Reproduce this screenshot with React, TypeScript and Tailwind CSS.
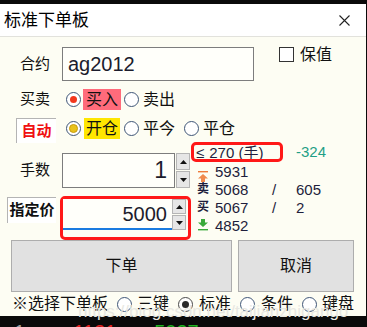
import React from "react";

function Radio({ kind }: { kind?: "red" | "yellow" | "dark" }) {
  return (
    <span
      className={
        "w-[15px] h-[15px] rounded-full border flex items-center justify-center shrink-0 bg-white " +
        (kind === "dark" ? "border-[#4a4a4a]" : "border-[#3f5677]")
      }
    >
      {kind === "red" && <span className="w-[7px] h-[7px] rounded-full bg-[#f2371c]" />}
      {kind === "yellow" && <span className="w-[9px] h-[9px] rounded-full bg-[#e9c21a] border border-[#c99d10]" />}
      {kind === "dark" && <span className="w-[7px] h-[7px] rounded-full bg-[#2a2a2a]" />}
    </span>
  );
}

function Spinner({ h }: { h: string }) {
  return (
    <div className={"w-[14px] flex flex-col gap-[1px] " + h}>
      <div className="flex-1 bg-[#e6e6e6] border border-[#b5b5b5] flex items-center justify-center">
        <svg width="7" height="4" viewBox="0 0 7 4">
          <polygon points="3.5,0 7,4 0,4" fill="#111" />
        </svg>
      </div>
      <div className="flex-1 bg-[#e6e6e6] border border-[#b5b5b5] flex items-center justify-center">
        <svg width="7" height="4" viewBox="0 0 7 4">
          <polygon points="0,0 7,0 3.5,4" fill="#111" />
        </svg>
      </div>
    </div>
  );
}

export default function App() {
  return (
    <div className="w-[367px] h-[327px] bg-[#0a0a0a] overflow-hidden flex flex-col font-['Liberation_Sans','Noto_Sans_CJK_SC',sans-serif] text-[#111]">
      <div className="h-[4px] shrink-0" />
      <div className="w-[366px] h-[312px] flex flex-col shrink-0">
        {/* title bar */}
        <div className="h-[32px] bg-white flex items-center justify-between shrink-0">
          <span className="ml-[4px] text-[17px] leading-none text-black">标准下单板</span>
          <svg width="11" height="11" viewBox="0 0 11 11" className="mr-[16px]">
            <path d="M0.5 0.5 L10.5 10.5 M10.5 0.5 L0.5 10.5" stroke="#222" strokeWidth="1.1" />
          </svg>
        </div>
        <div className="h-[1px] bg-[#e2e2dc] shrink-0" />
        {/* body */}
        <div className="flex-1 bg-[#fdfdf3] flex flex-col relative text-[16px]">
          {/* row 1 */}
          <div className="mt-[10px] h-[34px] flex items-center">
            <span className="ml-[20px] w-[42px] text-[15px]">合约</span>
            <div className="w-[192px] h-[34px] border border-[#7d7d7d] bg-[#fffffa] flex items-center">
              <span className="ml-[5px] text-[20px] text-[#1c1c2c]">ag2012</span>
            </div>
            <div className="self-start mt-[-1px] ml-[25px] flex items-center">
              <span className="w-[15px] h-[15px] border border-[#333] bg-white" />
              <span className="ml-[6px] text-[16px] leading-[16px] mt-[1px]">保值</span>
            </div>
          </div>
          {/* row 2 */}
          <div className="mt-[8px] h-[21px] flex items-center">
            <span className="ml-[20px] w-[46px] text-[15px]">买卖</span>
            <Radio kind="red" />
            <span className="ml-[2px] px-[3px] h-[21px] leading-[21px] bg-[#ff6b7b]">买入</span>
            <span className="ml-[3px]">
              <Radio />
            </span>
            <span className="ml-[4px] leading-[21px]">卖出</span>
          </div>
          {/* row 3 */}
          <div className="mt-[8px] h-[25px] flex items-start">
            <div className="ml-[16px] w-[40px] h-[25px] bg-white border-l border-t border-[#b4b4b4] flex items-center justify-center text-[15px] font-bold text-[#f01010]">
              自动
            </div>
            <span className="ml-[10px] mt-[3px]">
              <Radio kind="yellow" />
            </span>
            <span className="ml-[3px] px-[2px] h-[21px] leading-[21px] bg-[#ffe600]">开仓</span>
            <span className="ml-[4px] mt-[3px]">
              <Radio />
            </span>
            <span className="ml-[4px] h-[21px] leading-[21px]">平今</span>
            <span className="ml-[9px] mt-[3px]">
              <Radio />
            </span>
            <span className="ml-[4px] h-[21px] leading-[21px]">平仓</span>
          </div>
          {/* middle */}
          <div className="h-[97px] flex">
            <div className="w-[191px] flex flex-col shrink-0">
              <div className="mt-[10px] h-[35px] flex items-center">
                <span className="ml-[20px] w-[42px] text-[15px]">手数</span>
                <div className="w-[113px] h-[35px] border border-[#7d7d7d] bg-[#fffffa] flex items-center justify-end">
                  <span className="mr-[7px] text-[23px] text-[#1c1c2c]">1</span>
                </div>
                <div className="ml-[1px]">
                  <Spinner h="h-[35px]" />
                </div>
              </div>
              <div className="mt-[8px] h-[44px] flex items-start">
                <div className="ml-[7px] mt-[1px] w-[51px] h-[26px] bg-white border-l border-t border-[#b4b4b4] flex items-center justify-center text-[15px] font-bold">
                  指定价
                </div>
                <div className="ml-[4px] w-[131px] h-[44px] shrink-0 border-[3px] border-[#ff1818] rounded-[5px] flex items-start bg-[#fdfdf3]">
                  <div className="w-[109px] h-[31px] bg-[#fffffa] border-b-[2px] border-[#1a7be0] flex items-center justify-end">
                    <span className="mr-[5px] text-[20px] text-[#1c1c2c]">5000</span>
                  </div>
                  <Spinner h="h-[31px]" />
                </div>
              </div>
            </div>
            <div className="flex-1 flex flex-col text-[15px] text-[#1e1e3c]">
              <div className="mt-[-1px] h-[20px] flex items-center">
                <div className="w-[92px] h-[20px] border-[3px] border-[#ff1818] rounded-[5px] flex items-center shrink-0 overflow-hidden">
                  <span className="ml-[2px] leading-none text-[15px]">≤</span>
                  <span className="ml-[5px] leading-none text-[15px] whitespace-nowrap">270 (手)</span>
                </div>
                <span className="ml-[13px] text-[#1f9f86]">-324</span>
              </div>
              <div className="h-[18px] flex items-center">
                <div className="w-[24px] h-[18px] relative">
                  <svg width="12" height="12" viewBox="0 0 12 12" className="ml-[6px] mt-[9px]" style={{ overflow: "visible" }}>
                    <rect x="1" y="0" width="10" height="1.4" fill="#ee7a3a" />
                    <polygon points="6,3 11,7.5 8,7.5 8,11 4,11 4,7.5 1,7.5" fill="#f08a4e" />
                  </svg>
                </div>
                <span className="leading-none">5931</span>
              </div>
              <div className="h-[18px] flex items-center">
                <span className="w-[24px] pl-[6px] text-[12px] font-bold leading-none">卖</span>
                <span className="w-[57px] leading-none">5068</span>
                <span className="w-[24px] leading-none">/</span>
                <span className="leading-none">605</span>
              </div>
              <div className="h-[18px] flex items-center">
                <span className="w-[24px] pl-[6px] text-[12px] font-bold leading-none">买</span>
                <span className="w-[57px] leading-none">5067</span>
                <span className="w-[24px] leading-none">/</span>
                <span className="leading-none">2</span>
              </div>
              <div className="h-[18px] flex items-center">
                <div className="w-[24px] h-[18px]">
                  <svg width="12" height="12" viewBox="0 0 12 12" className="ml-[6px] mt-[3px]">
                    <polygon points="4,0 8,0 8,3.5 11,3.5 6,8 1,3.5 4,3.5" fill="#3aaa3a" />
                    <rect x="1" y="10" width="10" height="1.4" fill="#3aaa3a" />
                  </svg>
                </div>
                <span className="leading-none">4852</span>
              </div>
            </div>
          </div>
          {/* buttons */}
          <div className="h-[52px] flex">
            <div className="ml-[11px] w-[221px] h-[52px] bg-[#e1e1e1] border border-[#adadad] flex items-center justify-center">
              下单
            </div>
            <div className="ml-[6px] w-[116px] h-[52px] bg-[#e1e1e1] border border-[#adadad] flex items-center justify-center">
              取消
            </div>
          </div>
          {/* bottom row */}
          <div className="h-[24px] flex items-center">
            <span className="ml-[12px]">※选择下单板</span>
            <span className="ml-[9px]">
              <Radio />
            </span>
            <span className="ml-[5px]">三键</span>
            <span className="ml-[9px]">
              <Radio kind="dark" />
            </span>
            <span className="ml-[6px]">标准</span>
            <span className="ml-[9px]">
              <Radio />
            </span>
            <span className="ml-[6px]">条件</span>
            <span className="ml-[9px]">
              <Radio />
            </span>
            <span className="ml-[5px]">键盘</span>
          </div>
          <span className="absolute left-[78px] top-[262px] text-[17px] text-[#e8e8e2] pointer-events-none">
            https://blog.csdn.net/taijianzhigango
          </span>
        </div>
      </div>
      {/* bottom dark strip */}
      <div className="h-[11px] overflow-hidden flex items-start text-[20px] leading-[20px]">
        <span className="ml-[14px] mt-[6px] text-[#9a9a9a]">1</span>
        <span className="ml-[48px] mt-[6px] text-[#e02020]">1121</span>
        <span className="ml-[38px] mt-[6px] text-[#20b020]">5037</span>
      </div>
    </div>
  );
}
